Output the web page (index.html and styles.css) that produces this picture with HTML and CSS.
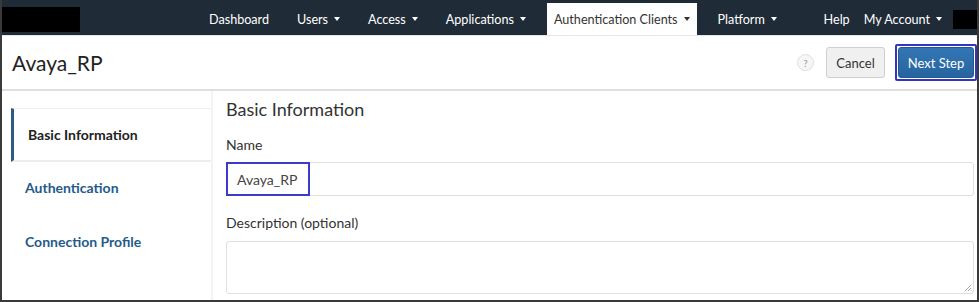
FILE: index.html
```html
<!DOCTYPE html>
<html>
<head>
<meta charset="utf-8">
<link rel="stylesheet" href="styles.css">
</head>
<body>
<div class="frame">
  <nav class="topnav">
    <div class="logo-block"></div>
    <ul class="nav-main">
      <li class="nav-item">Dashboard</li>
      <li class="nav-item">Users<span class="caret"></span></li>
      <li class="nav-item">Access<span class="caret"></span></li>
      <li class="nav-item">Applications<span class="caret"></span></li>
      <li class="nav-item active">Authentication Clients<span class="caret"></span></li>
      <li class="nav-item">Platform<span class="caret"></span></li>
    </ul>
    <ul class="nav-right">
      <li class="nav-item">Help</li>
      <li class="nav-item">My Account<span class="caret"></span></li>
    </ul>
    <div class="user-block"></div>
  </nav>

  <header class="page-head">
    <h1 class="page-title">Avaya_RP</h1>
    <div class="actions">
      <span class="help-icon">?</span>
      <button class="btn btn-cancel">Cancel</button>
      <div class="highlight-wrap">
        <button class="btn btn-primary">Next Step</button>
      </div>
    </div>
  </header>

  <div class="content">
    <aside class="sidenav">
      <div class="side-item active">Basic Information</div>
      <div class="side-item">Authentication</div>
      <div class="side-item">Connection Profile</div>
    </aside>
    <main class="main">
      <h2 class="section-title">Basic Information</h2>
      <label class="field-label">Name</label>
      <div class="input-wrap">
        <div class="text-input">Avaya_RP</div>
        <span class="annotation"></span>
      </div>
      <label class="field-label desc-label">Description (optional)</label>
      <div class="textarea">
        <svg class="grip" width="8" height="8" viewBox="0 0 8 8"><path d="M7 1L1 7M7 4L4 7M7 6.5L6.5 7" stroke="#aaa" stroke-width="1"/></svg>
      </div>
    </main>
  </div>
</div>
</body>
</html>
```

FILE: styles.css
```css
* { box-sizing: border-box; }
html, body { margin: 0; padding: 0; background: #fff; }
body { font-family: Lato, "Open Sans", "Liberation Sans", sans-serif; color: #333; }

.frame {
  width: 979px;
  height: 302px;
  border-left: 2px solid #3a3a3a;
  border-right: 2px solid #3a3a3a;
  border-bottom: 2px solid #3a3a3a;
  overflow: hidden;
  display: flex;
  flex-direction: column;
}

.topnav {
  height: 35px;
  background: #1f2b37;
  display: flex;
  align-items: flex-start;
  margin-left: -2px;
  margin-right: -2px;
  flex: none;
}
.logo-block {
  width: 80px;
  height: 25px;
  background: #000;
  margin-top: 7px;
  flex: none;
}
.nav-main, .nav-right {
  list-style: none;
  margin: 0;
  padding: 0;
  display: flex;
  gap: 14px;
  margin-top: 3px;
}
.nav-main { margin-left: 122px; }
.nav-right { margin-left: auto; gap: 0; }
.nav-item {
  height: 32px;
  padding: 0 7px;
  display: flex;
  align-items: center;
  color: #fff;
  font-size: 12.6px;
  white-space: nowrap;
}
.nav-item.active { background: #fff; color: #333; }
.caret {
  display: inline-block;
  width: 0; height: 0;
  border-left: 3px solid transparent;
  border-right: 3px solid transparent;
  border-top: 4px solid currentColor;
  margin-left: 6px;
}
.user-block {
  width: 26px;
  height: 19px;
  background: #000;
  margin-top: 10px;
  margin-left: 4px;
  flex: none;
}

.page-head {
  flex: none;
  height: 56px;
  border-top: 1px solid #e6e6e6;
  border-bottom: 2px solid #dedede;
  display: flex;
  align-items: center;
  justify-content: space-between;
  padding: 0 0 0 10px;
}
.page-title {
  margin: 0;
  font-weight: 400;
  font-size: 21px;
  color: #222;
}
.actions { display: flex; align-items: center; }
.help-icon {
  width: 17px; height: 17px;
  border-radius: 50%;
  border: 1px solid #e0e0e0;
  background: #f6f6f6;
  color: #999;
  font-size: 10px;
  display: flex; align-items: center; justify-content: center;
  margin-right: 12px;
}
.btn {
  font-family: inherit;
  font-size: 13px;
  border-radius: 3px;
  height: 31px;
  cursor: pointer;
}
.btn-cancel {
  width: 59px;
  background: #f0f0f0;
  border: 1px solid #cfcfcf;
  color: #333;
  margin-right: 10px;
  padding: 0;
}
.highlight-wrap {
  border: 2px solid #3434c4;
  padding: 1px;
  border-radius: 2px;
}
.btn-primary {
  display: block;
  width: 76px;
  background: linear-gradient(#3476b4, #25649f);
  border: 1px solid #215a8f;
  color: #fff;
  padding: 0;
}

.content { flex: 1; display: flex; min-height: 0; }
.sidenav {
  width: 211px;
  flex: none;
  border-right: 2px solid #f3f3f3;
  padding-top: 17px;
  padding-left: 9px;
}
.side-item {
  height: 54px;
  display: flex;
  align-items: center;
  padding-left: 14px;
  padding-bottom: 4px;
  font-size: 14px;
  font-weight: 700;
  color: #1f5b8b;
}
.side-item.active {
  border-top: 1px solid #eeeeee;
  border-bottom: 2px solid #eeeeee;
  border-left: 3px solid #2b5a84;
  padding-bottom: 0;
  color: #222;
}

.main {
  flex: 1;
  padding: 7px 3px 0 13px;
  min-width: 0;
}
.section-title {
  margin: 0;
  font-size: 18px;
  font-weight: 400;
  color: #333;
  line-height: 22px;
}
.field-label {
  display: block;
  font-size: 14px;
  color: #333;
  margin-top: 16px;
  line-height: 17px;
}
.input-wrap { position: relative; margin-top: 9px; }
.text-input {
  height: 34px;
  border: 1px solid #dcdfe3;
  border-radius: 3px;
  padding-left: 10px;
  display: flex;
  align-items: center;
  font-size: 14px;
  color: #444;
}
.annotation {
  position: absolute;
  left: 0; top: 0;
  width: 84px; height: 34px;
  border: 2px solid #3a3acd;
}
.desc-label { margin-top: 18px; }
.textarea {
  margin-top: 10px;
  height: 53px;
  border: 1px solid #dcdfe3;
  border-radius: 3px;
  position: relative;
}
.grip { position: absolute; right: 1px; bottom: 1px; }
```
